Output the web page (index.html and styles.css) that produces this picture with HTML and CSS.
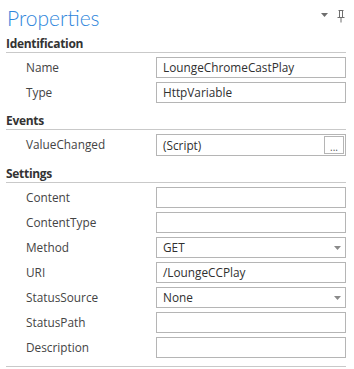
FILE: index.html
```html
<!DOCTYPE html>
<html lang="en">
<head>
    <meta charset="UTF-8">
    <meta name="viewport" content="width=device-width, initial-scale=1.0">
    <title>Properties</title>
    <link rel="stylesheet" href="styles.css">
</head>
<body>
    <div class="panel">
        <div class="title-bar">
            <h1 class="title">Properties</h1>
            <div class="tools">
                <svg class="tool-arrow" width="7" height="4" viewBox="0 0 7 4"><path d="M0 0H7L3.5 4Z" fill="#6e6e6e"/></svg>
                <svg class="tool-pin" width="8" height="13" viewBox="0 0 8 13">
                    <path d="M1.5 0.5H6.5M2.5 0.5V7.5M5.5 0.5V7.5M0.5 7.5H7.5M4 7.5V12.5" stroke="#6e6e6e" fill="none"/>
                </svg>
            </div>
        </div>

        <!-- Identification -->
        <div class="section">
            <div class="section-head">Identification</div>
            <div class="row">
                <span class="label">Name</span>
                <div class="field">LoungeChromeCastPlay</div>
            </div>
            <div class="row">
                <span class="label">Type</span>
                <div class="field">HttpVariable</div>
            </div>
        </div>

        <!-- Events -->
        <div class="section">
            <div class="section-head">Events</div>
            <div class="row row-tall">
                <span class="label">ValueChanged</span>
                <div class="field field-button">
                    <span>(Script)</span>
                    <span class="dots">...</span>
                </div>
            </div>
        </div>

        <!-- Settings -->
        <div class="section">
            <div class="section-head">Settings</div>
            <div class="row">
                <span class="label">Content</span>
                <div class="field"></div>
            </div>
            <div class="row">
                <span class="label">ContentType</span>
                <div class="field"></div>
            </div>
            <div class="row">
                <span class="label">Method</span>
                <div class="field field-select">
                    <span>GET</span>
                    <svg width="7" height="4" viewBox="0 0 7 4"><path d="M0 0H7L3.5 4Z" fill="#8a8a8a"/></svg>
                </div>
            </div>
            <div class="row">
                <span class="label">URI</span>
                <div class="field">/LoungeCCPlay</div>
            </div>
            <div class="row">
                <span class="label">StatusSource</span>
                <div class="field field-select">
                    <span>None</span>
                    <svg width="7" height="4" viewBox="0 0 7 4"><path d="M0 0H7L3.5 4Z" fill="#8a8a8a"/></svg>
                </div>
            </div>
            <div class="row">
                <span class="label">StatusPath</span>
                <div class="field"></div>
            </div>
            <div class="row">
                <span class="label">Description</span>
                <div class="field"></div>
            </div>
        </div>
        <div class="panel-end"></div>
    </div>
</body>
</html>
```

FILE: styles.css
```css
body {
    margin: 0;
    background-color: #ffffff;
    font-family: "Open Sans", "Noto Sans", sans-serif;
    color: #3c3c3c;
}

.panel {
    padding: 0 8px 0 6px;
}

.title-bar {
    display: flex;
    justify-content: space-between;
    height: 30px;
}

.title {
    margin: 0;
    padding: 6px 0 0 1px;
    font-family: "Lato", "Open Sans", sans-serif;
    font-size: 21px;
    font-weight: 300;
    line-height: 24px;
    color: #2f86dc;
}

.tools {
    display: flex;
    align-items: flex-start;
    gap: 9px;
    padding-top: 10px;
    margin-right: 1px;
}

.tool-arrow {
    margin-top: 3px;
}

.section + .section {
    margin-top: 4px;
}

.section-head {
    box-sizing: border-box;
    height: 23px;
    padding-top: 6px;
    font-size: 12px;
    font-weight: bold;
    line-height: 16px;
    letter-spacing: -0.3px;
    color: #333333;
    border-bottom: 1px solid #c9c9c9;
}

.row {
    display: grid;
    grid-template-columns: 150px 1fr;
    margin-top: 4px;
    height: 21px;
}

.row-tall {
    height: 22px;
}

.label {
    padding-left: 20px;
    font-size: 11.8px;
    line-height: 21px;
    color: #444444;
}

.field {
    box-sizing: border-box;
    border: 1px solid #b5b5b5;
    padding: 0 6px;
    font-size: 11.8px;
    line-height: 19px;
    color: #303030;
    white-space: nowrap;
}

.field-select,
.field-button {
    display: flex;
    justify-content: space-between;
    align-items: center;
}

.field-select span,
.field-button span {
    line-height: 19px;
}

.field-select svg {
    margin-right: -2px;
}

.field-button {
    padding-right: 1px;
}

.dots {
    box-sizing: border-box;
    width: 20px;
    height: 18px;
    border: 1px solid #b5b5b5;
    font-size: 10px;
    text-align: center;
    line-height: 20px !important;
    color: #555555;
}

.panel-end {
    margin-top: 8px;
    border-bottom: 1px solid #c9c9c9;
}
```
